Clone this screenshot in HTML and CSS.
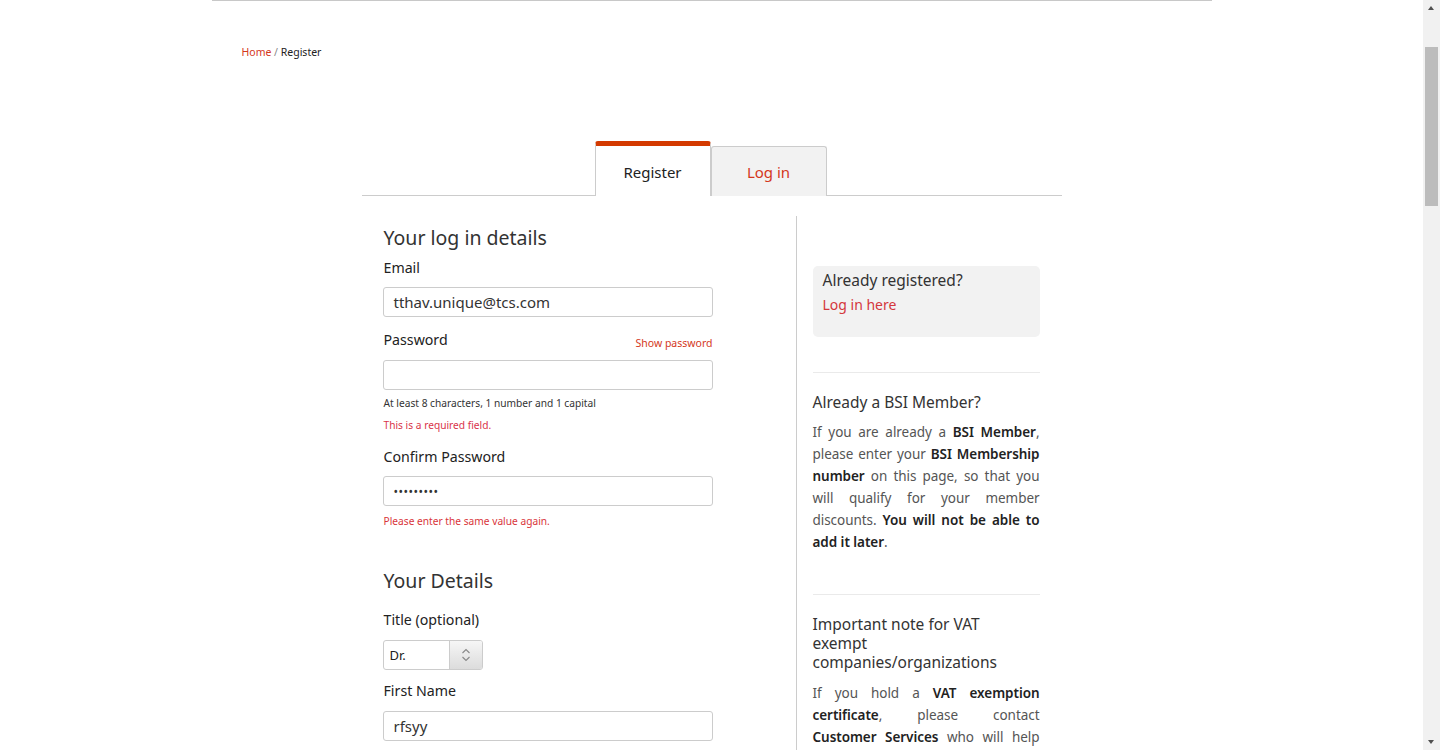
FILE: index.html
```html
<!DOCTYPE html>
<html lang="en">
<head>
<meta charset="utf-8">
<title>Register</title>
<link rel="stylesheet" href="styles.css">
</head>
<body>
<div class="page">
  <div class="topline"></div>
  <nav class="crumbs"><a href="#">Home</a> <span class="sep">/</span> Register</nav>

  <div class="tabs">
    <div class="tab active">Register</div>
    <div class="tab">Log in</div>
  </div>

  <div class="panel">
    <form class="left">
      <h2 class="sec-title">Your log in details</h2>
      <label class="lbl lbl-email">Email</label>
      <div class="field f-email"><span class="val">tthav.unique@tcs.com</span></div>

      <div class="lbl-row">
        <label class="lbl">Password</label>
        <a class="show" href="#">Show password</a>
      </div>
      <div class="field f-pass"></div>
      <p class="hint">At least 8 characters, 1 number and 1 capital</p>
      <p class="err err-req">This is a required field.</p>

      <label class="lbl lbl-confirm">Confirm Password</label>
      <div class="field f-confirm"><span class="dots">•••••••••</span></div>
      <p class="err err-same">Please enter the same value again.</p>

      <h2 class="sec-title sec-details">Your Details</h2>
      <label class="lbl lbl-title">Title (optional)</label>
      <div class="select">
        <span class="sel-val">Dr.</span>
        <span class="sel-arrow">
          <svg width="10" height="14" viewBox="0 0 10 14"><path d="M1.5 5 L5 1.5 L8.5 5" fill="none" stroke="#888" stroke-width="1.1"/><path d="M1.5 9 L5 12.5 L8.5 9" fill="none" stroke="#888" stroke-width="1.1"/></svg>
        </span>
      </div>
      <label class="lbl lbl-first">First Name</label>
      <div class="field f-first"><span class="val">rfsyy</span></div>

      <label class="lbl lbl-more">Last Name</label>
      <div class="field f-more"><span class="val">tyyty</span></div>
      <label class="lbl lbl-more">Company (optional)</label>
      <div class="field f-more"></div>
      <label class="lbl lbl-more">Job title (optional)</label>
      <div class="field f-more"></div>
      <label class="lbl lbl-more">Telephone</label>
      <div class="field f-more"></div>
      <label class="lbl lbl-more">BSI Membership number (optional)</label>
      <div class="field f-more"></div>
    </form>

    <aside class="right">
      <div class="reg-box">
        <div class="reg-title">Already registered?</div>
        <a class="reg-link" href="#">Log in here</a>
      </div>
      <hr class="rule rule-1">
      <h3 class="side-title">Already a BSI Member?</h3>
      <p class="side-text">If you are already a <b>BSI Member</b>, please enter your <b>BSI Membership number</b> on this page, so that you will qualify for your member discounts. <b>You will not be able to add it later</b>.</p>
      <hr class="rule rule-2">
      <h3 class="side-title vat-title">Important note for VAT exempt companies/organizations</h3>
      <p class="side-text vat-text">If you hold a <b>VAT exemption certificate</b>, please contact <b>Customer Services</b> who will help you to set up your account so that you are not charged VAT on your orders.</p>
    </aside>
  </div>
</div>

<div class="scrollbar" aria-hidden="true">
  <span class="sb-up"></span>
  <span class="sb-thumb"></span>
  <span class="sb-down"></span>
</div>
</body>
</html>
```

FILE: styles.css
```css
html, body {
  margin: 0;
  padding: 0;
  background: #fff;
}
body {
  font-family: "Noto Sans", "Open Sans", Arial, sans-serif;
  color: #333;
  padding-right: 17px;
}
a { text-decoration: none; }

.page {
  width: 1000px;
  margin: 0 auto;
  min-height: 3300px;
}
.topline {
  height: 1px;
  background: #c8c8c8;
}
.crumbs {
  margin: 44px 0 0 30px;
  font-size: 10.5px;
  line-height: 14px;
  color: #222;
}
.crumbs a { color: #d4371c; }
.crumbs .sep { color: #888; }

.tabs {
  width: 700px;
  margin: 83px auto 0;
  display: flex;
  justify-content: center;
  border-bottom: 1px solid #ccc;
  height: 54px;
  align-items: flex-end;
  box-sizing: border-box;
  padding-right: 2px;
}
.tab {
  box-sizing: border-box;
  width: 116px;
  height: 50px;
  margin-bottom: -1px;
  border: 1px solid #ccc;
  border-bottom: none;
  background: #f2f2f2;
  border-radius: 3px 3px 0 0;
  color: #d4371c;
  font-size: 15px;
  text-align: center;
  padding-top: 15px;
}
.tab.active {
  width: 116px;
  height: 55px;
  background: #fff;
  border-top: 5px solid #d43a00;
  color: #222;
  padding-top: 16px;
}

.panel {
  width: 700px;
  margin: 20px auto 0;
  display: flex;
  align-items: stretch;
}
.left {
  width: 435px;
  flex: none;
  box-sizing: border-box;
  padding: 0 83px 0 21px;
  border-right: 1px solid #ccc;
  min-height: 1200px;
}
.right {
  flex: 1;
  padding: 0 22px 0 16px;
}

.sec-title {
  margin: 10px 0 0;
  padding-left: 1px;
  font-size: 19.5px;
  line-height: 24px;
  font-weight: 400;
  color: #333;
}
.sec-details { margin-top: 41px; }
.lbl {
  display: block;
  padding-left: 1px;
  font-size: 14.2px;
  line-height: 20px;
  color: #222;
}
.lbl-email { margin-top: 8px; }
.lbl-confirm { margin-top: 15px; }
.lbl-title { margin-top: 17px; }
.lbl-first { margin-top: 11px; }
.lbl-more { margin-top: 11px; }

.lbl-row {
  display: flex;
  justify-content: space-between;
  align-items: flex-end;
  margin-top: 13px;
}
.show {
  font-size: 10.5px;
  color: #d4371c;
  line-height: 14px;
}

.field {
  box-sizing: border-box;
  height: 30px;
  width: 330px;
  border: 1px solid #ccc;
  border-radius: 3px;
  background: #fff;
  margin-top: 9px;
  padding: 0 10px;
  display: flex;
  align-items: center;
  font-size: 15px;
  color: #333;
}
.f-pass { margin-top: 10px; }
.f-first, .f-more { margin-top: 10px; }
.dots {
  font-size: 12px;
  letter-spacing: 0.5px;
  color: #333;
}

.hint {
  margin: 6px 0 0;
  padding-left: 1px;
  font-size: 10.2px;
  line-height: 14px;
  color: #333;
}
.err {
  margin: 8px 0 0;
  padding-left: 1px;
  font-size: 10.2px;
  line-height: 14px;
  color: #d9344a;
}
.err-same { color: #d9343a; }

.select {
  box-sizing: border-box;
  width: 100px;
  height: 30px;
  margin-top: 10px;
  border: 1px solid #ccc;
  border-radius: 3px;
  display: flex;
  overflow: hidden;
}
.sel-val {
  flex: 1;
  padding-left: 6px;
  font-size: 13px;
  line-height: 28px;
  color: #222;
}
.sel-arrow {
  width: 32px;
  border-left: 1px solid #ccc;
  background: linear-gradient(#f6f6f6, #dcdcdc);
  display: flex;
  align-items: center;
  justify-content: center;
}

.reg-box {
  margin-top: 50px;
  height: 71px;
  box-sizing: border-box;
  background: #f2f2f2;
  border-radius: 5px;
  padding: 4px 10px 0;
}
.reg-title {
  font-size: 15.5px;
  line-height: 20px;
  color: #333;
}
.reg-link {
  display: block;
  margin-top: 5px;
  font-size: 14px;
  line-height: 20px;
  color: #d4373c;
}
.rule {
  border: none;
  border-top: 1px solid #eaeaea;
  margin: 35px 0 0;
}
.rule-2 { margin-top: 41px; }
.side-title {
  margin: 19px 0 0;
  font-size: 15.5px;
  line-height: 20px;
  font-weight: 400;
  color: #333;
}
.vat-title {
  margin-top: 20px;
  line-height: 19px;
  max-width: 215px;
}
.side-text {
  margin: 9px 0 0;
  font-size: 13.5px;
  letter-spacing: -0.05px;
  line-height: 22px;
  text-align: justify;
  color: #555;
}
.side-text b {
  font-weight: 600;
  color: #222;
}
.vat-text { margin-top: 10px; }

.scrollbar {
  position: fixed;
  top: 0;
  right: 0;
  width: 17px;
  height: 100%;
  background: #f1f1f1;
}
.sb-thumb {
  position: absolute;
  left: 2px;
  width: 13px;
  top: 47px;
  height: 159px;
  background: #bcbcbc;
}
.sb-up, .sb-down {
  position: absolute;
  left: 5px;
  width: 0;
  height: 0;
  border-left: 3.5px solid transparent;
  border-right: 3.5px solid transparent;
}
.sb-up {
  top: 6px;
  border-bottom: 4px solid #505050;
}
.sb-down {
  bottom: 6px;
  border-top: 4px solid #505050;
}
```
